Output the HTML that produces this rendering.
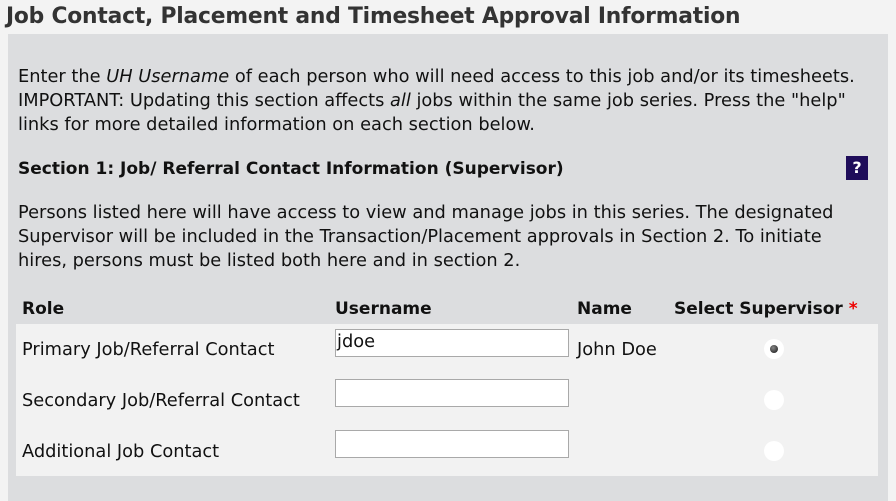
<!DOCTYPE html>
<html><head><style>
body{margin:0;width:896px;height:501px;background:#f3f3f3;font-family:"DejaVu Sans",sans-serif;color:#111;position:relative;overflow:hidden}
.a{position:absolute;white-space:nowrap}
h1{position:absolute;left:6px;top:4px;margin:0;font-size:21.8px;font-weight:bold;color:#333;letter-spacing:-0.2px}
.panel{position:absolute;left:8px;top:34px;width:880px;height:467px;background:#dcdddf}
.p{font-size:17.8px;line-height:24px;left:18px}
.b{font-weight:bold;font-size:17px}
.tb{position:absolute;left:16px;top:324px;width:862px;height:152px;background:#f2f2f2}
.in{position:absolute;left:335px;width:234px;height:28px;background:#fff;border:1px solid #a9a9a9;box-sizing:border-box;font-size:17.8px;line-height:24px;padding-left:1px}
.r{position:absolute;left:764px;width:20px;height:20px;border-radius:50%;background:#fff}
</style></head><body>
<h1>Job Contact, Placement and Timesheet Approval Information</h1>
<div class="panel"></div>
<div class="a p" style="top:65px">Enter the <i>UH Username</i> of each person who will need access to this job and/or its timesheets.<br>IMPORTANT: Updating this section affects <i>all</i> jobs within the same job series. Press the "help"<br>links for more detailed information on each section below.</div>
<div class="a p b" style="top:157px">Section 1: Job/ Referral Contact Information (Supervisor)</div>
<div class="a" style="left:846px;top:156px;width:22px;height:24px;background:#1f0d5a;color:#fff;font-weight:bold;font-size:16px;text-align:center;line-height:24px">?</div>
<div class="a p" style="top:201px">Persons listed here will have access to view and manage jobs in this series. The designated<br>Supervisor will be included in the Transaction/Placement approvals in Section 2. To initiate<br>hires, persons must be listed both here and in section 2.</div>
<div class="a p b" style="left:22px;top:297px">Role</div>
<div class="a p b" style="left:335px;top:297px">Username</div>
<div class="a p b" style="left:577px;top:297px">Name</div>
<div class="a p b" style="left:674px;top:297px">Select Supervisor <span style="color:#e00">*</span></div>
<div class="tb"></div>
<div class="a p" style="left:22px;top:338px">Primary Job/Referral Contact</div>
<div class="a p" style="left:22px;top:389px">Secondary Job/Referral Contact</div>
<div class="a p" style="left:22px;top:440px">Additional Job Contact</div>
<div class="in" style="top:329px">jdoe</div>
<div class="in" style="top:379px"></div>
<div class="in" style="top:430px"></div>
<div class="a p" style="left:577px;top:338px">John Doe</div>
<div class="r" style="top:339px"><div style="position:absolute;left:6px;top:6px;width:8px;height:8px;border-radius:50%;background:radial-gradient(circle at 40% 35%,#888,#111)"></div></div>
<div class="r" style="top:390px"></div>
<div class="r" style="top:441px"></div>
</body></html>
